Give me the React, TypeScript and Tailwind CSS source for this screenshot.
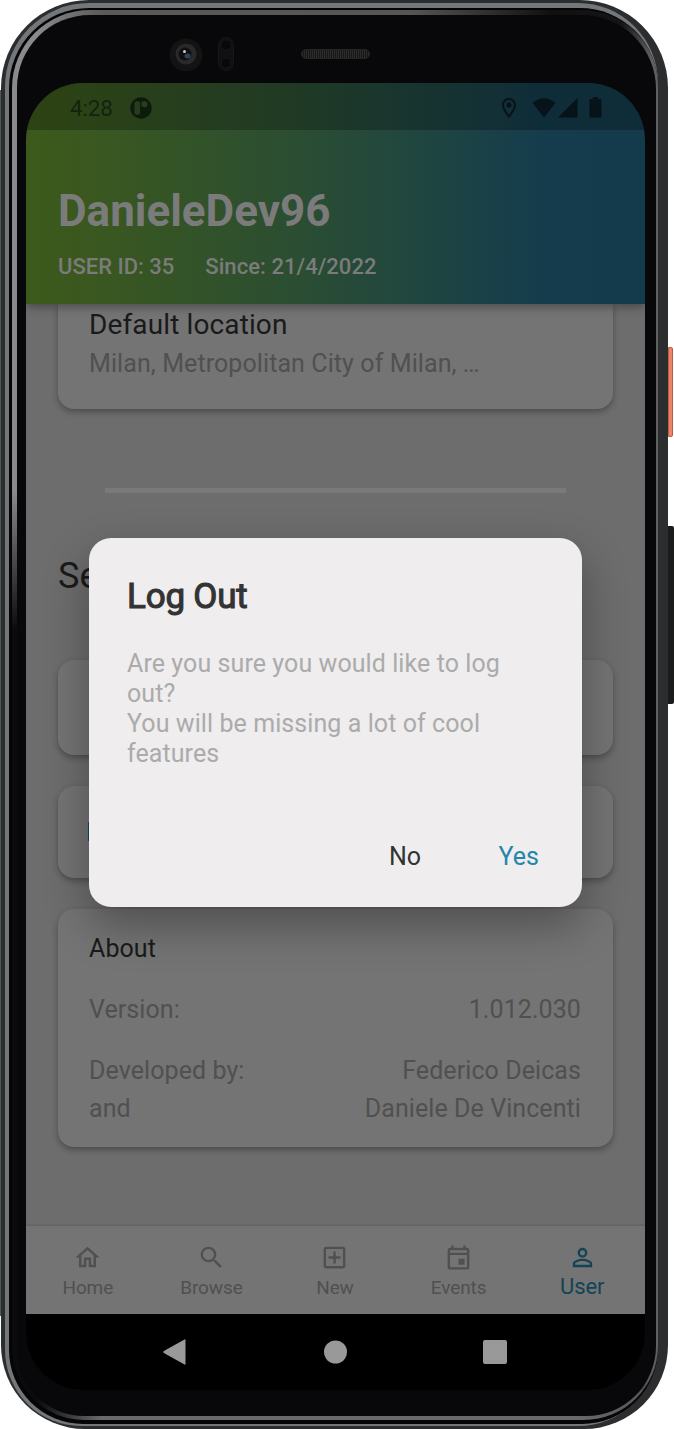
import { ReactNode } from "react";
import {
  MdOutlineHome,
  MdSearch,
  MdOutlineAddBox,
  MdOutlineEvent,
  MdPersonOutline,
  MdOutlineLocationOn,
} from "react-icons/md";

function Frame({ children }: { children: ReactNode }) {
  return (
    <div className="ml-px h-[1429px] w-[667px] rounded-[88px_88px_84px_84px] bg-[#2b2d2e] pt-[3px] pr-[10px] pb-[3px] pl-[4px]">
      <div className="h-full w-full rounded-[84px_80px_80px_76px] bg-[#74777a] pt-[5px] pb-[2px] pl-[4px]">
        <div className="h-full w-full rounded-[80px_78px_76px_74px] bg-[#050506] pt-[2px] pb-[4px] pl-[3px]">
          <div className="h-full w-full rounded-[78px_76px_74px_72px] bg-[linear-gradient(90deg,#0b0b0c_25px,#6a6a6a_90px,#6a6a6a_560px,#555_640px),linear-gradient(180deg,transparent_480px,#0b0b0c_620px),linear-gradient(90deg,#8a8a8a_0px,#8a8a8a_25px,#5a5a5a_90px,#555_400px,#101010_540px,#151515_610px,#606060_640px)] bg-[length:100%_30px,45px_100%,100%_100%] bg-[position:left_bottom,left_top,left_top] bg-no-repeat pt-[5px] pr-[2px] pb-[4px] pl-[5px]">
            <div className="h-full w-full rounded-[73px_74px_70px_67px] bg-[#08080a] pr-[11px] pb-[26px] pl-[9px]">
              {children}
            </div>
          </div>
        </div>
      </div>
    </div>
  );
}

function Bezel() {
  return (
    <div className="flex h-[68px] items-start pt-[22px] pl-[143px]">
      <svg width="34" height="34" viewBox="0 0 34 34">
        <circle cx="17" cy="18" r="16.5" fill="#131314" />
        <circle cx="17" cy="17" r="10.5" fill="#29292a" />
        <circle cx="16" cy="17" r="6.5" fill="#101014" />
        <ellipse cx="18.5" cy="19" rx="3" ry="2.5" fill="#35405c" />
        <circle cx="15.5" cy="14.5" r="1.5" fill="#c8c8c8" />
      </svg>
      <svg className="ml-[15px]" width="16" height="34" viewBox="0 0 16 34">
        <rect x="0.5" y="0.5" width="15" height="33" rx="7.5" fill="#101011" stroke="#161617" />
        <circle cx="8" cy="8" r="5" fill="#08080a" stroke="#151517" />
        <circle cx="8" cy="26" r="5" fill="#08080a" stroke="#151517" />
      </svg>
      <div className="mt-[12px] ml-[67px] h-[10px] w-[69px] rounded-full border border-[#242424] bg-[repeating-linear-gradient(90deg,#2a2a2a_0px,#2a2a2a_1px,#191919_1px,#191919_2px)]" />
    </div>
  );
}

function StatusBar() {
  return (
    <div className="flex h-[47px] items-center bg-black/25 pt-[2px] pr-[43px] pl-[44px] text-[#0c1a0c]">
      <span className="w-[44px] pt-px text-[22.500px] leading-[28px] tracking-[-0.2px] whitespace-nowrap text-[#13230f]">
        4:28
      </span>
      <svg className="ml-[16px]" width="22" height="22" viewBox="0 0 22 22">
        <circle cx="11" cy="11" r="10.7" fill="#0e1a0b" />
        <rect x="4.500" y="4.200" width="5.600" height="13.600" rx="2" fill="#263e1e" />
        <path d="M11.600 4.200h1.200v5.400h-1.200z" fill="#263e1e" />
        <circle cx="14.600" cy="7.200" r="3" fill="#263e1e" />
      </svg>
      <div className="ml-auto flex items-center text-[#06141a]">
        <MdOutlineLocationOn className="mr-[11px] size-[24px]" />
        <svg width="24" height="20" viewBox="0 0 24 20">
          <path d="M.5 5C7-1.300 17-1.300 23.500 5L12 19.500z" fill="currentColor" />
        </svg>
        <svg className="ml-[2px]" width="20" height="20" viewBox="0 0 20 20">
          <path d="M19.500 0v19.500H0z" fill="currentColor" />
        </svg>
        <svg className="ml-[11px]" width="13" height="21" viewBox="0 0 13 21">
          <path d="M4 0h5v2h2.500q1 0 1 1v16.500q0 1-1 1h-10q-1 0-1-1V3q0-1 1-1H4z" fill="currentColor" />
        </svg>
      </div>
    </div>
  );
}

function Header() {
  return (
    <header className="relative h-[221px] bg-[linear-gradient(90deg,#3c5a1b_0%,#3a581f_10%,#2c4e31_42%,#1f4541_65%,#143c4d_84%,#143b4c_100%)] text-[#7b7b7b] shadow-[0_3px_9px_rgba(0,0,0,0.35)]">
      <StatusBar />
      <h1 className="pt-[55px] pl-[32px] text-[44px] leading-[52px] font-bold whitespace-nowrap">DanieleDev96</h1>
      <div className="flex gap-[31px] pt-[16px] pl-[32px] text-[22px] leading-[28px] font-medium whitespace-nowrap">
        <span>USER ID: 35</span>
        <span className="tracking-[0.05px]">Since: 21/4/2022</span>
      </div>
    </header>
  );
}

const card = "rounded-[16px] bg-[#747474] shadow-[0_3px_6px_rgba(0,0,0,0.3)]";

function Settings() {
  return (
    <main className="h-[922px] overflow-hidden bg-[#6d6d6d] px-[32px]">
      <section className="h-[105px] rounded-b-[16px] bg-[#747474] pl-[31px] shadow-[0_3px_6px_rgba(0,0,0,0.3)]">
        <h2 className="pt-[4px] text-[28px] leading-[34px] tracking-[0.12px] text-[#1a1a1a]">Default location</h2>
        <p className="pt-[6px] text-[25px] leading-[32px] tracking-[0.09px] text-[#505050]">
          Milan, Metropolitan City of Milan, …
        </p>
      </section>
      <div className="mx-auto mt-[79px] h-[5px] w-[461px] bg-[#7a7a7a]" />
      <h2 className="pt-[61px] text-[36px] leading-[44px] text-[#1a1a1a]">Se</h2>
      <section className={`${card} mt-[62px] h-[95px]`} />
      <section className={`${card} mt-[31px] flex h-[92px] items-center pl-[30px]`}>
        <div className="-mt-px h-[19px] w-[19px] bg-[#164861]" />
      </section>
      <section
        className={`${card} mt-[31px] h-[238px] pt-[24px] pr-[32px] pl-[31px] text-[25px] leading-[32px] tracking-[0.08px] text-[#505050]`}
      >
        <h3 className="text-[#1a1a1a]">About</h3>
        <div className="mt-[29px] flex justify-between">
          <span>Version:</span>
          <span>1.012.030</span>
        </div>
        <div className="mt-[29px] flex justify-between">
          <span>Developed by:</span>
          <span>Federico Deicas</span>
        </div>
        <div className="mt-[6px] flex justify-between">
          <span>and</span>
          <span>Daniele De Vincenti</span>
        </div>
      </section>
    </main>
  );
}

const tabs = [
  { label: "Home", Icon: MdOutlineHome },
  { label: "Browse", Icon: MdSearch },
  { label: "New", Icon: MdOutlineAddBox },
  { label: "Events", Icon: MdOutlineEvent },
  { label: "User", Icon: MdPersonOutline, active: true },
];

function TabBar() {
  return (
    <nav className="relative grid h-[88px] grid-cols-5 bg-[#747474] pr-[1px] shadow-[0_-1px_2px_rgba(0,0,0,0.12)]">
      {tabs.map(({ label, Icon, active }) => (
        <div
          key={label}
          className={
            active
              ? "flex flex-col items-center pt-[17px] text-[#124457]"
              : "flex flex-col items-center pt-[17px] text-[#505050]"
          }
        >
          <Icon className="size-[29px]" />
          <span
            className={
              active
                ? "pt-px text-[22px] leading-[28px] tracking-[-0.1px]"
                : "pt-[4px] text-[19px] leading-[24px] tracking-[-0.1px]"
            }
          >
            {label}
          </span>
        </div>
      ))}
    </nav>
  );
}

function SystemNav() {
  return (
    <div className="flex h-[76px] items-center justify-between rounded-b-[57px] bg-black px-[137px] text-[#999]">
      <svg width="23" height="26" viewBox="0 0 23 26">
        <path d="M22.500 1v24q0 1-1 .5L.8 13.900q-1-.9 0-1.800L21.500.5q1-.5 1 .5z" fill="currentColor" />
      </svg>
      <svg width="24" height="24" viewBox="0 0 24 24">
        <circle cx="12.500" cy="12" r="11.500" fill="currentColor" />
      </svg>
      <div className="mr-[1px] size-[24px] rounded-[2px] bg-[#999]" />
    </div>
  );
}

function LogoutDialog() {
  return (
    <div
      role="dialog"
      className="absolute top-[455px] left-[63px] h-[369px] w-[493px] rounded-[22px] bg-[#efedee] pt-[38px] pr-[43px] pl-[38px] shadow-[0_18px_45px_rgba(0,0,0,0.32)]"
    >
      <h2 className="text-[35px] leading-[42px] font-normal tracking-[-0.2px] text-[#333] [-webkit-text-stroke:1.1px_#333]">
        Log Out
      </h2>
      <p className="mt-[31px] text-[25px] leading-[30px] tracking-[0.08px] whitespace-nowrap text-[#ababab]">
        Are you sure you would like to log
        <br />
        out?
        <br />
        You will be missing a lot of cool
        <br />
        features
      </p>
      <div className="mt-[72px] flex justify-end gap-[77.500px] text-[25px] leading-[32px] text-[#333]">
        <button>No</button>
        <button className="text-[#2486ab]">Yes</button>
      </div>
    </div>
  );
}

export default function App() {
  return (
    <div className="relative h-[1429px] w-[674px] overflow-hidden bg-white font-['Roboto',sans-serif]">
      <Frame>
        <Bezel />
        <div className="relative h-[1307px] w-[619px] overflow-hidden rounded-[57px]">
          <Header />
          <Settings />
          <TabBar />
          <SystemNav />
          <LogoutDialog />
        </div>
      </Frame>
      <div className="absolute top-[347px] left-[668px] h-[90px] w-[5px] rounded-r-[2px] border border-[#b4604d] bg-[#f0826a]" />
      <div className="absolute top-[526px] left-[668px] h-[178px] w-[6px] rounded-r-[2px] bg-[#1c1c1c]" />
      <div className="absolute top-[90px] left-0 h-[1226px] w-px bg-[#555]" />
    </div>
  );
}
